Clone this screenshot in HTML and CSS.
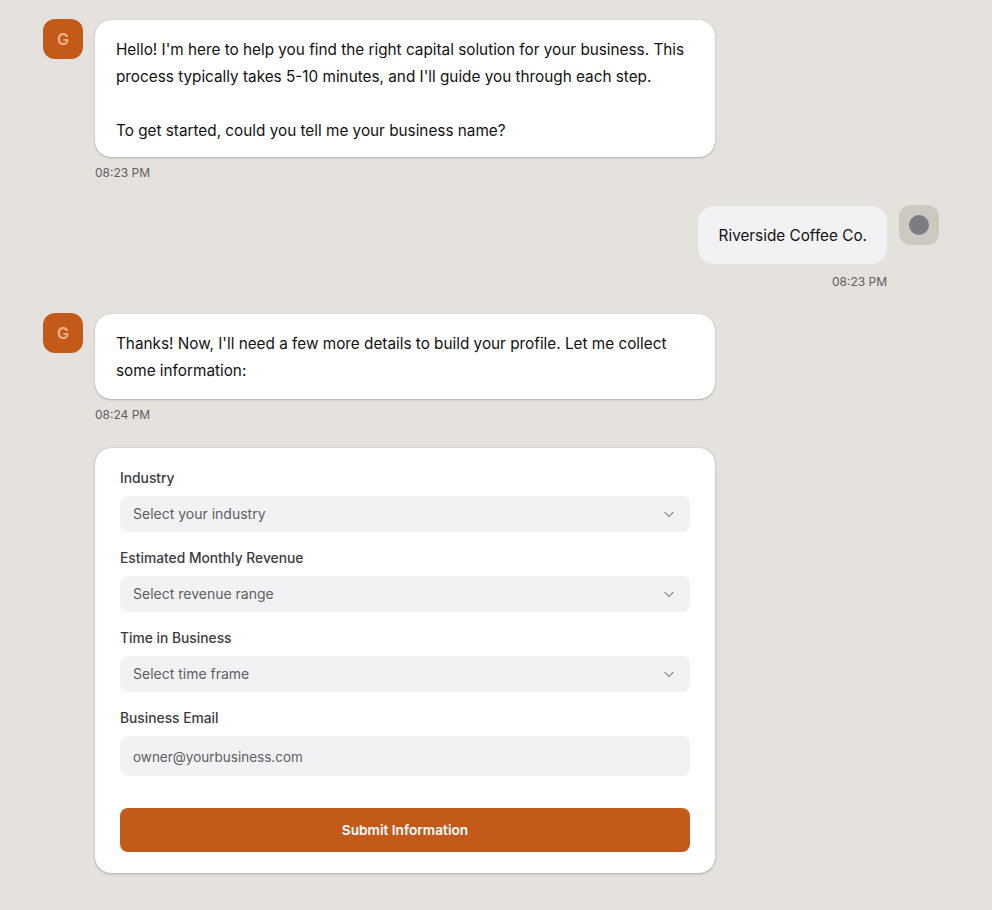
FILE: index.html
```html
<!DOCTYPE html>
<html lang="en">
<head>
  <meta charset="UTF-8" />
  <title>Capital Assistant</title>
  <meta name="viewport" content="width=device-width, initial-scale=1.0" />
  <link rel="stylesheet" href="styles.css">
</head>
<body>
  <main class="chat">
    <!-- Assistant greeting -->
    <div class="msg">
      <div class="avatar avatar-bot">G</div>
      <div class="msg-body">
        <div class="bubble bubble-intro">Hello! I'm here to help you find the right capital solution for your business. This process typically takes 5-10 minutes, and I'll guide you through each step.<br><br>To get started, could you tell me your business name?</div>
        <div class="time">08:23 PM</div>
      </div>
    </div>

    <!-- User reply -->
    <div class="msg msg-user">
      <div class="msg-body">
        <div class="bubble bubble-user">Riverside Coffee Co.</div>
        <div class="time">08:23 PM</div>
      </div>
      <div class="avatar avatar-user"><span class="dot"></span></div>
    </div>

    <div class="msg">
      <div class="avatar avatar-bot">G</div>
      <div class="msg-body">
        <div class="bubble">Thanks! Now, I'll need a few more details to build your profile. Let me collect some information:</div>
        <div class="time">08:24 PM</div>
      </div>
    </div>

    <!-- Profile form -->
    <form class="card">
      <label class="label">Industry</label>
      <div class="select">
        <span>Select your industry</span>
        <svg class="chev" width="12" height="12" viewBox="0 0 12 12"><path d="M1.5 4l4.5 4.5L10.5 4"/></svg>
      </div>
      <label class="label">Estimated Monthly Revenue</label>
      <div class="select">
        <span>Select revenue range</span>
        <svg class="chev" width="12" height="12" viewBox="0 0 12 12"><path d="M1.5 4l4.5 4.5L10.5 4"/></svg>
      </div>
      <label class="label">Time in Business</label>
      <div class="select">
        <span>Select time frame</span>
        <svg class="chev" width="12" height="12" viewBox="0 0 12 12"><path d="M1.5 4l4.5 4.5L10.5 4"/></svg>
      </div>
      <label class="label">Business Email</label>
      <input class="input" type="email" placeholder="owner@yourbusiness.com" />
      <button class="submit" type="button">Submit Information</button>
    </form>
  </main>
</body>
</html>
```

FILE: styles.css
```css
* {
  box-sizing: border-box;
}

body {
  font-family: Inter, 'Liberation Sans', sans-serif;
  background-color: #e5e1dc;
  color: #111;
  margin: 0;
  padding: 19px 53px 37px 43px;
}

.chat {
  display: flex;
  flex-direction: column;
}

.msg {
  display: flex;
  gap: 12px;
  margin-bottom: 24px;
}

.msg-user {
  justify-content: flex-end;
  margin-bottom: 23px;
}

.avatar {
  width: 40px;
  height: 40px;
  flex-shrink: 0;
  border-radius: 12px;
  display: flex;
  align-items: center;
  justify-content: center;
}

.avatar-bot {
  background-color: #c45a1a;
  color: #f0b488;
  font-size: 16px;
  font-weight: 600;
}

.avatar-user {
  background-color: #cdc8c0;
}

.dot {
  width: 20px;
  height: 20px;
  border-radius: 50%;
  background-color: #7d7c82;
}

.msg-body {
  width: 620px;
  padding-top: 1px;
}

.msg-user .msg-body {
  width: auto;
}

.bubble {
  background-color: #fff;
  border-radius: 16px;
  padding: 16px 21px 15px;
  font-size: 15.3px;
  line-height: 27px;
  box-shadow: 0 0 1px rgba(0, 0, 0, 0.25), 0 1px 2px rgba(0, 0, 0, 0.2);
}

.bubble-intro {
  padding-bottom: 13px;
}

.bubble-user {
  background-color: #f2f2f5;
  box-shadow: none;
  padding: 15.5px 20px 15.5px 21px;
}

.time {
  margin-top: 8px;
  font-size: 12px;
  line-height: 16px;
  color: #5e5e63;
}

.msg-user .time {
  text-align: right;
  margin-top: 10px;
}

.card {
  margin-top: 1px;
  margin-left: 52px;
  width: 620px;
  background-color: #fff;
  border-radius: 16px;
  padding: 20px 25px 21px;
  display: flex;
  flex-direction: column;
  box-shadow: 0 0 1px rgba(0, 0, 0, 0.25), 0 1px 3px rgba(0, 0, 0, 0.22);
}

.label {
  font-size: 13.8px;
  font-weight: 500;
  line-height: 20px;
  color: #3a3a3f;
  margin-bottom: 8px;
}

.select {
  height: 36px;
  background-color: #f2f2f4;
  border-radius: 8px;
  padding: 0 15px 1px 13px;
  margin-bottom: 16px;
  display: flex;
  align-items: center;
  justify-content: space-between;
  font-size: 14px;
  color: #5e5e63;
}

.chev {
  fill: none;
  stroke: #8e8e93;
  stroke-width: 1.2;
}

.input {
  height: 40px;
  border: none;
  background-color: #f2f2f4;
  border-radius: 8px;
  padding: 1px 13px 0;
  font-family: inherit;
  font-size: 13.5px;
  margin-bottom: 32px;
}

.input::placeholder {
  color: #5e5e63;
  opacity: 1;
}

.submit {
  height: 44px;
  border: none;
  border-radius: 8px;
  background-color: #c45a1a;
  color: #fff;
  font-family: inherit;
  font-size: 13.7px;
  font-weight: 600;
  cursor: pointer;
}
```
